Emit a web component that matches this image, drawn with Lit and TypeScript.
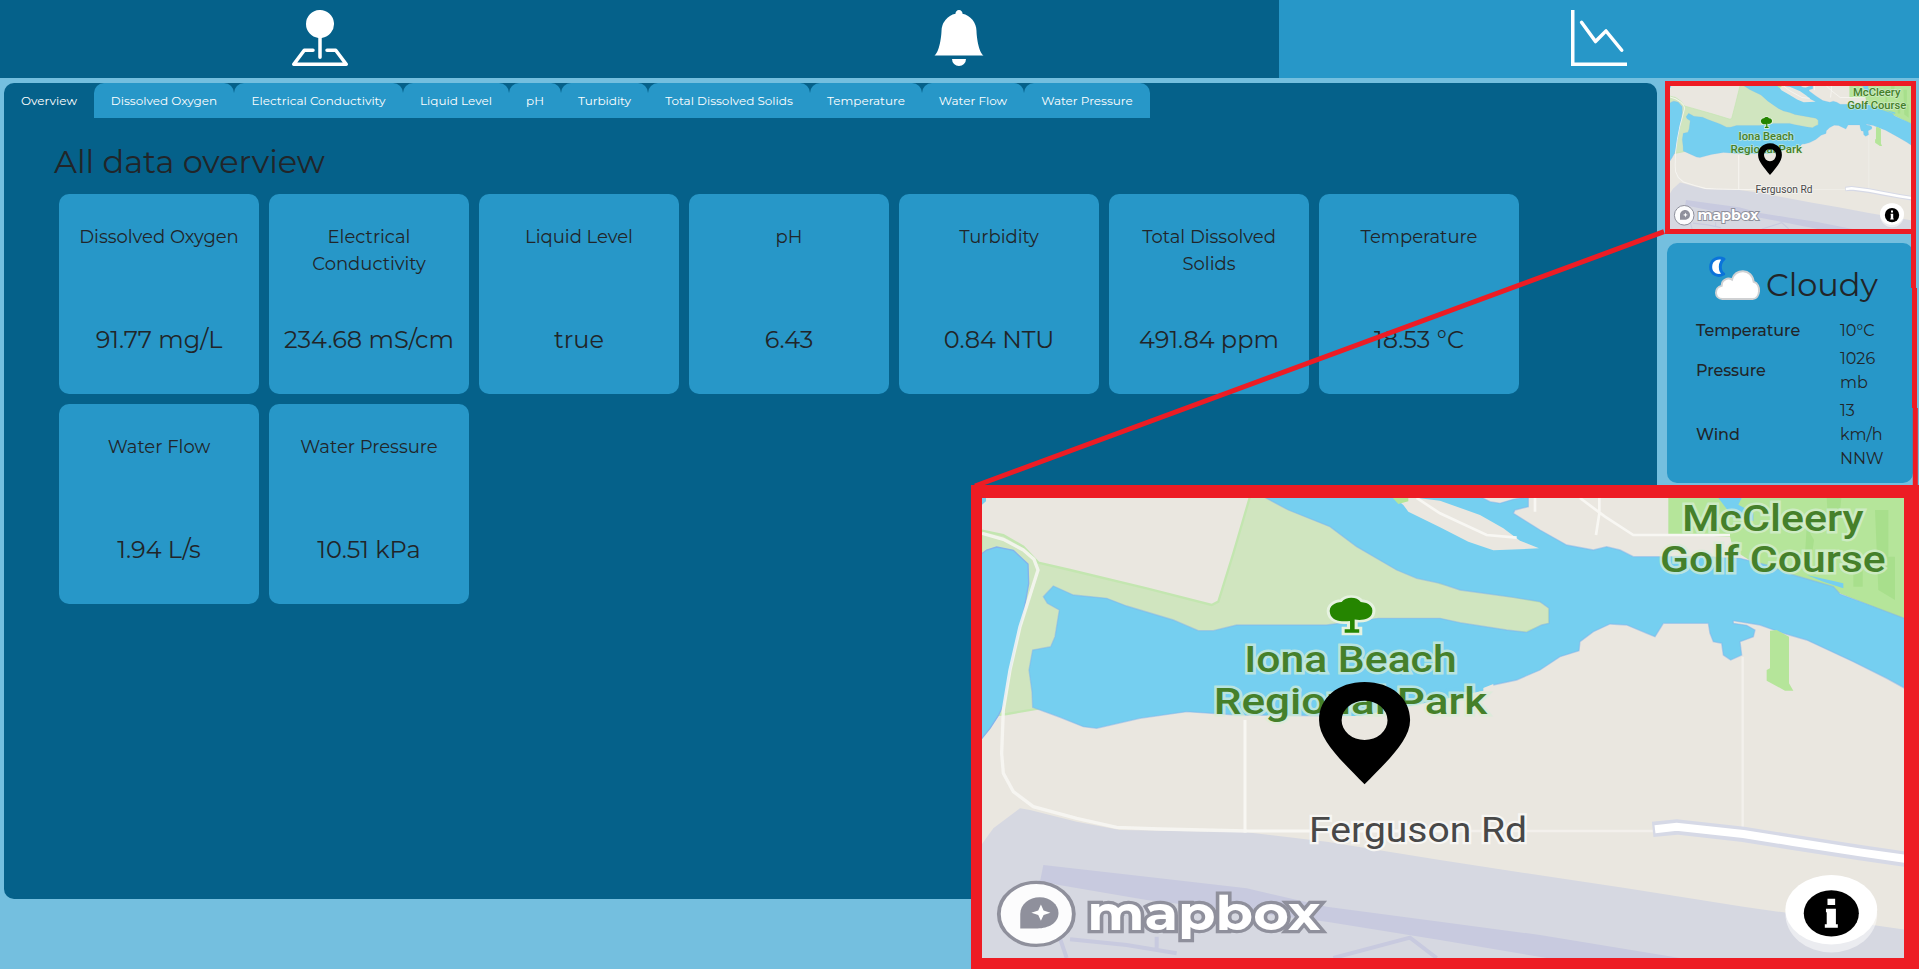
import { LitElement, html, css } from "lit";
import { customElement, property } from "lit/decorators.js";

const TABS: [string, number][] = [
  ["Overview", 90], ["Dissolved Oxygen", 140], ["Electrical Conductivity", 169],
  ["Liquid Level", 106], ["pH", 52], ["Turbidity", 87], ["Total Dissolved Solids", 162],
  ["Temperature", 112], ["Water Flow", 102], ["Water Pressure", 126],
];

const READINGS = [
  ["Dissolved Oxygen", "91.77 mg/L"], ["Electrical Conductivity", "234.68 mS/cm"],
  ["Liquid Level", "true"], ["pH", "6.43"], ["Turbidity", "0.84 NTU"],
  ["Total Dissolved Solids", "491.84 ppm"], ["Temperature", "18.53 °C"],
  ["Water Flow", "1.94 L/s"], ["Water Pressure", "10.51 kPa"],
];

@customElement("area-map")
class AreaMap extends LitElement {
  static styles = css`
    :host { display: block; width: 100%; height: 100%; }
    svg { display: block; width: 100%; height: 100%; }
    text { font-family: Roboto, "Liberation Sans", sans-serif; }
    .park { font-size: 11.4px; font-weight: 500; fill: #45802a; stroke: #d9eed6; stroke-opacity: .7; stroke-width: 1.5px; paint-order: stroke; text-anchor: middle; }
    .road { font-size: 10.8px; fill: #484848; stroke: #f7f6f3; stroke-width: 1.4px; paint-order: stroke; text-anchor: middle; }
    .brand { font-family: Montserrat, Inter, sans-serif; font-size: 15px; font-weight: 700; fill: #fff; stroke: #8f909c; stroke-width: 2px; paint-order: stroke; }
  `;

  render() {
    return html`<svg viewBox="0 0 241 143" preserveAspectRatio="none">
      <rect width="241" height="143" fill="#eae7e0"/>
      <g transform="scale(.0871294 .1036232) translate(-66 -84)">
        <path fill="#d0e5bf" stroke="#c3e6b0" stroke-width="7" d="M66 182L130 195L190 230L235 278L330 300L560 355L755 405L775 395L820 250L870 80L1000 80L1440 340L1767 400V460L1700 485L1440 500H300V540L240 560V715L140 732L60 740Z"/>
        <path fill="#b5e59a" d="M2125 84H2832V450L2720 403L2620 362L2500 325L2400 290L2320 240L2310 200L2125 192Z"/>
        <path fill="#a8df8c" d="M2600 84h44l-6 60h-34zM2745 120h40v140h20v130l-50-30zM2680 270h28v80h-28zM2540 170l22 40-8 60h-20z"/>
        <path fill="#75cff0" stroke="#82b4ec" stroke-width="4" d="M60 255L80 240L110 231L160 241L204 282L206 340L192 420L172 500L155 580L140 650L130 705L116 735L90 775L60 812Z"/>
        <path fill="#75cff0" d="M66 84h12v10l-12 10z"/>
        <path fill="#75cff0" stroke="#82b4ec" stroke-opacity=".5" stroke-width="4" d="M910 80L985 120L1110 170L1190 230L1310 300L1370 325L1440 340L1500 360L1660 382L1740 395L1767 415V460L1745 465L1700 487L1640 480L1500 458L1440 445H1255L1100 465H830L760 482H715L640 450L500 408L440 385L340 375L280 348L250 380L262 400L298 420L285 500L272 530L218 540L207 600L216 665L218 712L300 742L370 770L410 775L540 745L680 725L830 735L1440 740L1560 665L1600 645L1670 630L1740 600L1800 560L1857 542L1860 515L1900 485L1950 462L2000 465L2060 490L2085 500L2110 460H2245L2250 490L2260 515L2285 520L2290 555L2312 570L2345 555L2340 515L2380 500L2385 480L2360 466L2320 460V452L2400 465L2470 490L2540 510L2680 575L2780 625L2840 658V448L2780 425L2720 402L2640 372L2620 350L2500 315L2420 285L2340 265L2240 260H2020L1980 240L1940 230L1900 240L1820 225L1740 180L1660 130L1665 120L1705 110V80L1660 88L1620 100L1590 95L1560 80Z"/>
        <path fill="#eae7e0" d="M1340 80L1440 92L1560 135L1630 175L1680 212L1737 235L1600 241L1525 215L1440 172L1345 125L1330 105L1300 80Z"/>
        <path fill="#b5e59a" d="M1295 80h50v14l-30 8z"/>
        <path fill="#eae7e0" d="M1100 736L1545 664L1600 642V780H1080Z"/>
        <path fill="#75cff0" d="M1080 700L1440 660L1570 640V662L1440 690L1200 738H1080Z"/>
        <path fill="#75cff0" d="M2275 84h70l-10 20 45 24v25l-60-10zM2540 315l110 25v15l-60-20z"/>
        <path fill="#b5e59a" d="M2430 482L2450 480L2487 500V640L2500 662H2475L2420 632V600L2430 595Z"/>
        <path fill="#d6d8e1" d="M60 1130L100 1075L180 1015L210 1020L350 1055L480 1080L860 1087L1100 1115L1440 1170L1700 1210L2000 1255L2350 1310L2840 1380V1470H60Z"/>
        <path fill="#c8cadf" d="M250 1185L560 1220L860 1255L1100 1310L1440 1355L1740 1395L2160 1464H1760L1440 1410L1100 1355L560 1290L240 1235Z"/>
        <path fill="none" stroke="#c8cadf" stroke-width="12" d="M240 1230L320 1464M330 1408L500 1425L650 1450M590 1400v40M1120 1464L1350 1403L1430 1464"/>
        <g fill="none" stroke="#f8f7f3">
          <path stroke-width="10" stroke-opacity=".85" d="M66 190L130 208L190 240L222 268L234 300L215 360L180 470L150 600L130 720L125 850L130 910L160 965L220 1010L350 1045L470 1072L600 1077L860 1083"/>
          <path stroke-width="9" d="M855 750V1083H1500"/>
          <path stroke-width="7" stroke-opacity=".6" d="M1500 1083H2080M2348 560V1075"/>
          <path stroke-width="8" d="M1370 84L1440 130L1580 195L1670 203M1725 84V125M1918 84V130L1908 195M1860 84L1935 140L2020 195H2310"/>
        </g>
        <path fill="none" stroke="#d6d9e6" stroke-width="46" d="M2078 1078L2150 1071L2350 1093L2500 1117L2700 1148L2840 1168"/>
        <path fill="none" stroke="#fff" stroke-width="24" d="M2085 1078L2150 1070L2350 1092L2500 1116L2700 1147L2840 1167"/>
      </g>
      <path fill="#258500" stroke="#e6f2e0" stroke-width="1.6" paint-order="stroke" d="M91 36c-.6-2.6 1.4-3.6 3-3.7 1.3-1.9 4.2-1.5 5 0 2.2.2 3.3 1.5 3 3.3-.3 2.2-2.6 2.5-4.600 2.200v3h1.200v1.100h-3.800v-1.100h1.400v-2.600c-2 .4-4.700.1-5.200-2.200z"/>
      <text class="park" x="206.7" y="10.3" textLength="47.5" lengthAdjust="spacingAndGlyphs">McCleery</text>
      <text class="park" x="206.7" y="23" textLength="59" lengthAdjust="spacingAndGlyphs">Golf Course</text>
      <text class="park" x="96.3" y="54" textLength="55.5" lengthAdjust="spacingAndGlyphs">Iona Beach</text>
      <text class="park" x="96.3" y="67" textLength="71.5" lengthAdjust="spacingAndGlyphs">Regional Park</text>
      <text class="road" x="114" y="107" textLength="57" lengthAdjust="spacingAndGlyphs">Ferguson Rd</text>
      <path fill-rule="evenodd" d="M100 57.2c7 0 11.9 5 11.9 11.8 0 6.5-6.2 13-11.900 20-5.700-7-11.900-13.500-11.900-20 0-6.800 4.900-11.800 11.900-11.800zM100 63a6 6.100 0 1 0 0 12.200 6 6.100 0 0 0 0-12.200z"/>
      <circle cx="14.2" cy="129.3" r="9.8" fill="#fcfcfd" stroke="#8f909c" stroke-width="1"/>
      <path fill="#8f909c" d="M10 133.800v-4.500c0-3 2.300-5.200 5.100-5.200 2.700 0 4.900 2.200 4.900 4.900 0 3.100-2.700 4.800-5.500 4.800z"/>
      <path fill="#fff" d="M15.400 126.400l.7 1.800 1.800.7-1.800.7-.7 1.800-.7-1.800-1.800-.7 1.800-.7z"/>
      <text class="brand" x="27.5" y="134.3" textLength="61" lengthAdjust="spacingAndGlyphs">mapbox</text>
      <circle cx="222" cy="129.3" r="12" fill="#fff" fill-opacity=".5"/>
      <ellipse cx="222" cy="128" rx="12" ry="10.8" fill="#fff"/>
      <circle cx="222" cy="129.1" r="7.2"/>
      <path fill="#fff" d="M221 124.600h2v1.900h-2zM220.600 127.700h2.600v4.800h.5v1.100h-3.400v-1.100h.5v-3.700h-.2z"/>
    </svg>`;
  }
}

@customElement("reading-card")
class ReadingCard extends LitElement {
  @property() label = "";
  @property() value = "";
  static styles = css`
    :host { display: grid; grid-template-rows: 98px 40px; align-content: start; box-sizing: border-box; height: 200px; padding: 30px 10px 0; border-radius: 10px; background: #2797c8; text-align: center; color: #212529; }
    .label { font-size: 18px; line-height: 27px; }
    .value { font-size: 24px; line-height: 36px; white-space: nowrap; }
  `;
  render() {
    return html`<div class="label">${this.label}</div><div class="value">${this.value}</div>`;
  }
}

@customElement("app-root")
class AppRoot extends LitElement {
  static styles = css`
    :host { display: block; position: relative; height: 969px; overflow: hidden; background: #74bfdf; color: #212529; font-family: Montserrat, Inter, "Open Sans", sans-serif; font-weight: 400; }
    .nav { display: grid; grid-template-columns: repeat(3, 1fr); height: 78px; background: #05618a; }
    .nav div { display: flex; justify-content: center; padding-top: 10px; }
    .nav .active { background: #2797c8; }
    .nav svg { width: 56px; height: 56px; fill: #fff; }
    .main { display: flex; gap: 8px; padding: 5px 3px 0 4px; align-items: flex-start; }
    .panel { width: 1653px; height: 816px; border-radius: 10px; background: #05618a; overflow: hidden; flex: none; }
    .tabs { display: flex; height: 35px; }
    .tab { flex: none; border-radius: 10px 10px 0 0; background: #2797c8; color: #fff; font-size: 12px; line-height: 36px; text-align: center; white-space: nowrap; }
    .tab.active { background: none; }
    h1 { margin: 25px 0 0 50px; font-size: 32px; line-height: 38px; font-weight: 400; }
    .cards { display: grid; grid-template-columns: repeat(7, 200px); gap: 10px; margin: 13px 0 0 55px; }
    .side { width: 251px; margin-top: -2px; flex: none; }
    .mini { box-sizing: border-box; height: 153px; border: 5px solid #ed1c24; }
    .weather { box-sizing: border-box; width: 246px; height: 240px; margin: 9px 0 0 2px; padding-top: 13px; border-radius: 10px; background: #2797c8; }
    .head { display: flex; margin-left: 42px; gap: 5px; height: 63px; }
    .head svg { width: 52px; height: 46px; flex: none; }
    .head span { font-size: 32px; line-height: 58px; }
    .facts { display: grid; grid-template-columns: 144px 50px; row-gap: 4px; margin-left: 29px; font-size: 16px; line-height: 24px; align-items: center; }
    .facts b { font-weight: 500; letter-spacing: -.005em; }
    .callout { position: absolute; left: 971px; top: 485px; width: 948px; height: 484px; box-sizing: border-box; border: solid #ed1c24; border-width: 13px 15px 11px 11px; }
    .leader { position: absolute; inset: 0; width: 1919px; height: 969px; pointer-events: none; fill: none; stroke: #ed1c24; stroke-width: 5; }
  `;

  render() {
    return html`
      <div class="nav">
        <div><svg viewBox="0 0 16 16"><path fill-rule="evenodd" d="M3.1 11.2a.5.5 0 0 1 .4-.2H6a.5.5 0 0 1 0 1H3.75L1.5 15h13l-2.25-3H10a.5.5 0 0 1 0-1h2.5a.5.5 0 0 1 .4.2l3 4a.5.5 0 0 1-.4.8H.5a.5.5 0 0 1-.4-.8l3-4z"/><path d="M4 4a4 4 0 1 1 4.5 3.969V13.5a.5.5 0 0 1-1 0V7.97A4 4 0 0 1 4 3.999z"/></svg></div>
        <div><svg viewBox="0 0 16 16"><path d="M8 16a2 2 0 0 0 2-2H6a2 2 0 0 0 2 2zm.995-14.901a1 1 0 1 0-1.99 0A5.002 5.002 0 0 0 3 6c0 1.098-.5 6-2 7h14c-1.5-1-2-5.902-2-7 0-2.42-1.72-4.44-4.005-4.901z"/></svg></div>
        <div class="active"><svg viewBox="0 0 16 16"><path fill-rule="evenodd" d="M0 0h1v15h15v1H0V0Zm14.817 11.887a.5.5 0 0 0 .07-.704l-4.5-5.5a.5.5 0 0 0-.74-.037L7.06 8.233 3.404 3.206a.5.5 0 0 0-.808.588l4 5.5a.5.5 0 0 0 .758.06l2.609-2.61 4.15 5.073a.5.5 0 0 0 .704.07Z"/></svg></div>
      </div>
      <div class="main">
        <section class="panel">
          <div class="tabs">${TABS.map(([name, w], i) => html`<div class="tab ${i === 0 ? "active" : ""}" style="width:${w}px">${name}</div>`)}</div>
          <h1>All data overview</h1>
          <div class="cards">${READINGS.map(([l, v]) => html`<reading-card label=${l} value=${v}></reading-card>`)}</div>
        </section>
        <aside class="side">
          <div class="mini"><area-map></area-map></div>
          <div class="weather">
            <div class="head">
              <svg viewBox="0 0 156 138">
                <path fill="#fff" stroke="#0a73da" stroke-width="9" stroke-linejoin="round" d="M45 9C29 1 5 9 5 33c0 22 22 31 39 21C30 45 31 19 45 9z"/>
                <path fill="#fff" stroke="#cfd1d3" stroke-width="6" d="M40 129C16 129 14 94 38 89C38 69 58 64 69 71C77 36 129 36 134 77C158 84 154 129 131 129Z"/>
              </svg>
              <span>Cloudy</span>
            </div>
            <div class="facts">
              <b>Temperature</b><span>10°C</span>
              <b>Pressure</b><span>1026<br>mb</span>
              <b>Wind</b><span>13<br>km/h<br>NNW</span>
            </div>
          </div>
        </aside>
      </div>
      <svg class="leader" viewBox="0 0 1919 969"><path d="M975 486L1664 231.7M1913.5 232V288M1914.5 288V408M1915.3 408V486"/></svg>
      <div class="callout"><area-map></area-map></div>`;
  }
}
